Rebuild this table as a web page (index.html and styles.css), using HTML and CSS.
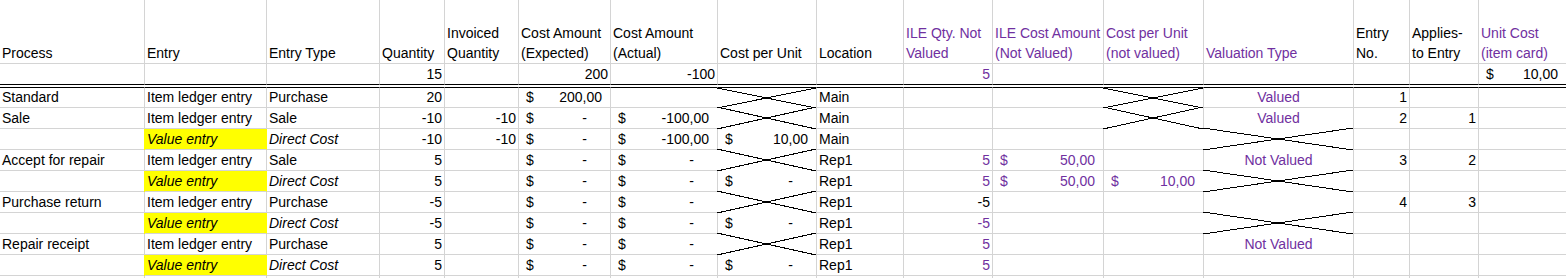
FILE: index.html
```html
<!DOCTYPE html>
<html lang="en">
<head>
<meta charset="utf-8">
<title>Item ledger entries</title>
<link rel="stylesheet" href="styles.css">
</head>
<body>
<div class="sheet">
  <!-- header -->
  <div class="c h">Process</div>
  <div class="c h">Entry</div>
  <div class="c h">Entry Type</div>
  <div class="c h">Quantity</div>
  <div class="c h">Invoiced<br>Quantity</div>
  <div class="c h">Cost Amount<br>(Expected)</div>
  <div class="c h">Cost Amount<br>(Actual)</div>
  <div class="c h">Cost per Unit</div>
  <div class="c h">Location</div>
  <div class="c h p">ILE Qty. Not<br>Valued</div>
  <div class="c h p">ILE Cost Amount<br>(Not Valued)</div>
  <div class="c h p">Cost per Unit<br>(not valued)</div>
  <div class="c h p">Valuation Type</div>
  <div class="c h">Entry<br>No.</div>
  <div class="c h">Applies-<br>to Entry</div>
  <div class="c h p">Unit Cost<br>(item card)</div>

  <!-- totals -->
  <div class="c t"></div>
  <div class="c t"></div>
  <div class="c t"></div>
  <div class="c t r">15</div>
  <div class="c t"></div>
  <div class="c t r">200</div>
  <div class="c t r">-100</div>
  <div class="c t"></div>
  <div class="c t"></div>
  <div class="c t r p">5</div>
  <div class="c t"></div>
  <div class="c t"></div>
  <div class="c t"></div>
  <div class="c t"></div>
  <div class="c t"></div>
  <div class="c t a"><span>$</span><span>10,00</span></div>

  <!-- Standard -->
  <div class="c f">Standard</div>
  <div class="c f">Item ledger entry</div>
  <div class="c f">Purchase</div>
  <div class="c f r">20</div>
  <div class="c f"></div>
  <div class="c f a"><span>$</span><span>200,00</span></div>
  <div class="c f"></div>
  <div class="c f x"><svg preserveAspectRatio="none"><line x1="0" y1="0" x2="100%" y2="100%"/><line x1="0" y1="100%" x2="100%" y2="0"/></svg></div>
  <div class="c f">Main</div>
  <div class="c f"></div>
  <div class="c f"></div>
  <div class="c f x"><svg preserveAspectRatio="none"><line x1="0" y1="0" x2="100%" y2="100%"/><line x1="0" y1="100%" x2="100%" y2="0"/></svg></div>
  <div class="c f m p">Valued</div>
  <div class="c f r">1</div>
  <div class="c f"></div>
  <div class="c f"></div>

  <!-- Sale -->
  <div class="c">Sale</div>
  <div class="c">Item ledger entry</div>
  <div class="c">Sale</div>
  <div class="c r">-10</div>
  <div class="c r">-10</div>
  <div class="c a"><span>$</span><span class="d">-</span></div>
  <div class="c a"><span>$</span><span>-100,00</span></div>
  <div class="c x"><svg preserveAspectRatio="none"><line x1="0" y1="0" x2="100%" y2="100%"/><line x1="0" y1="100%" x2="100%" y2="0"/></svg></div>
  <div class="c">Main</div>
  <div class="c"></div>
  <div class="c"></div>
  <div class="c x"><svg preserveAspectRatio="none"><line x1="0" y1="0" x2="100%" y2="100%"/><line x1="0" y1="100%" x2="100%" y2="0"/></svg></div>
  <div class="c m p">Valued</div>
  <div class="c r">2</div>
  <div class="c r">1</div>
  <div class="c"></div>

  <!-- Sale value entry -->
  <div class="c"></div>
  <div class="c y i">Value entry</div>
  <div class="c i">Direct Cost</div>
  <div class="c r">-10</div>
  <div class="c r">-10</div>
  <div class="c a"><span>$</span><span class="d">-</span></div>
  <div class="c a"><span>$</span><span>-100,00</span></div>
  <div class="c a"><span>$</span><span>10,00</span></div>
  <div class="c">Main</div>
  <div class="c"></div>
  <div class="c"></div>
  <div class="c"></div>
  <div class="c x"><svg preserveAspectRatio="none"><line x1="0" y1="0" x2="100%" y2="100%"/><line x1="0" y1="100%" x2="100%" y2="0"/></svg></div>
  <div class="c"></div>
  <div class="c"></div>
  <div class="c"></div>

  <!-- Accept for repair -->
  <div class="c">Accept for repair</div>
  <div class="c">Item ledger entry</div>
  <div class="c">Sale</div>
  <div class="c r">5</div>
  <div class="c"></div>
  <div class="c a"><span>$</span><span class="d">-</span></div>
  <div class="c a"><span>$</span><span class="d">-</span></div>
  <div class="c x"><svg preserveAspectRatio="none"><line x1="0" y1="0" x2="100%" y2="100%"/><line x1="0" y1="100%" x2="100%" y2="0"/></svg></div>
  <div class="c">Rep1</div>
  <div class="c r p">5</div>
  <div class="c a p"><span>$</span><span>50,00</span></div>
  <div class="c"></div>
  <div class="c m p">Not Valued</div>
  <div class="c r">3</div>
  <div class="c r">2</div>
  <div class="c"></div>

  <!-- Accept for repair value entry -->
  <div class="c"></div>
  <div class="c y i">Value entry</div>
  <div class="c i">Direct Cost</div>
  <div class="c r">5</div>
  <div class="c"></div>
  <div class="c a"><span>$</span><span class="d">-</span></div>
  <div class="c a"><span>$</span><span class="d">-</span></div>
  <div class="c a"><span>$</span><span class="d">-</span></div>
  <div class="c">Rep1</div>
  <div class="c r p">5</div>
  <div class="c a p"><span>$</span><span>50,00</span></div>
  <div class="c a p"><span>$</span><span>10,00</span></div>
  <div class="c x"><svg preserveAspectRatio="none"><line x1="0" y1="0" x2="100%" y2="100%"/><line x1="0" y1="100%" x2="100%" y2="0"/></svg></div>
  <div class="c"></div>
  <div class="c"></div>
  <div class="c"></div>

  <!-- Purchase return -->
  <div class="c">Purchase return</div>
  <div class="c">Item ledger entry</div>
  <div class="c">Purchase</div>
  <div class="c r">-5</div>
  <div class="c"></div>
  <div class="c a"><span>$</span><span class="d">-</span></div>
  <div class="c a"><span>$</span><span class="d">-</span></div>
  <div class="c x"><svg preserveAspectRatio="none"><line x1="0" y1="0" x2="100%" y2="100%"/><line x1="0" y1="100%" x2="100%" y2="0"/></svg></div>
  <div class="c">Rep1</div>
  <div class="c r">-5</div>
  <div class="c"></div>
  <div class="c"></div>
  <div class="c"></div>
  <div class="c r">4</div>
  <div class="c r">3</div>
  <div class="c"></div>

  <!-- Purchase return value entry -->
  <div class="c"></div>
  <div class="c y i">Value entry</div>
  <div class="c i">Direct Cost</div>
  <div class="c r">-5</div>
  <div class="c"></div>
  <div class="c a"><span>$</span><span class="d">-</span></div>
  <div class="c a"><span>$</span><span class="d">-</span></div>
  <div class="c a"><span>$</span><span class="d">-</span></div>
  <div class="c">Rep1</div>
  <div class="c r p">-5</div>
  <div class="c"></div>
  <div class="c"></div>
  <div class="c x"><svg preserveAspectRatio="none"><line x1="0" y1="0" x2="100%" y2="100%"/><line x1="0" y1="100%" x2="100%" y2="0"/></svg></div>
  <div class="c"></div>
  <div class="c"></div>
  <div class="c"></div>

  <!-- Repair receipt -->
  <div class="c">Repair receipt</div>
  <div class="c">Item ledger entry</div>
  <div class="c">Purchase</div>
  <div class="c r">5</div>
  <div class="c"></div>
  <div class="c a"><span>$</span><span class="d">-</span></div>
  <div class="c a"><span>$</span><span class="d">-</span></div>
  <div class="c x"><svg preserveAspectRatio="none"><line x1="0" y1="0" x2="100%" y2="100%"/><line x1="0" y1="100%" x2="100%" y2="0"/></svg></div>
  <div class="c">Rep1</div>
  <div class="c r p">5</div>
  <div class="c"></div>
  <div class="c"></div>
  <div class="c m p">Not Valued</div>
  <div class="c"></div>
  <div class="c"></div>
  <div class="c"></div>

  <!-- Repair receipt value entry -->
  <div class="c"></div>
  <div class="c y i">Value entry</div>
  <div class="c i">Direct Cost</div>
  <div class="c r">5</div>
  <div class="c"></div>
  <div class="c a"><span>$</span><span class="d">-</span></div>
  <div class="c a"><span>$</span><span class="d">-</span></div>
  <div class="c a"><span>$</span><span class="d">-</span></div>
  <div class="c">Rep1</div>
  <div class="c r p">5</div>
  <div class="c"></div>
  <div class="c"></div>
  <div class="c"></div>
  <div class="c"></div>
  <div class="c"></div>
  <div class="c"></div>

  <!-- empty row -->
  <div class="c"></div><div class="c"></div><div class="c"></div><div class="c"></div>
  <div class="c"></div><div class="c"></div><div class="c"></div><div class="c"></div>
  <div class="c"></div><div class="c"></div><div class="c"></div><div class="c"></div>
  <div class="c"></div><div class="c"></div><div class="c"></div><div class="c"></div>
</div>
</body>
</html>
```
FILE: styles.css
```css
html, body {
  margin: 0;
  padding: 0;
  background: #fff;
}

body {
  overflow: hidden;
  font-family: "Liberation Sans", Arial, sans-serif;
  font-size: 14px;
  color: #000;
}

.sheet {
  display: grid;
  grid-template-columns: 145px 122px 113px 65px 74px 92px 107px 99px 87px 89px 111px 100px 150px 56px 69px 88px;
  width: 1567px;
}

.c {
  box-sizing: border-box;
  height: 21px;
  border-right: 1px solid #d4d4d4;
  border-bottom: 1px solid #d4d4d4;
  padding: 0 2px;
  display: flex;
  align-items: flex-end;
  line-height: 20px;
  white-space: nowrap;
}

.h {
  height: 64px;
}

.t {
  border-bottom-color: #000;
}

.f {
  border-top: 1px solid #000;
  margin-top: 2px;
}

.r {
  justify-content: flex-end;
}

.m {
  justify-content: center;
}

.a {
  justify-content: space-between;
  padding: 0 8px 0 7px;
}

.d {
  margin-right: 15px;
}

.p {
  color: #7030a0;
}

.i {
  font-style: italic;
}

.y {
  background: #ffff00;
  border-right-color: #ffff00;
  box-shadow: -1px 0 0 #ffff00;
}

.x {
  position: relative;
}

.x svg {
  position: absolute;
  top: -1px;
  left: -1px;
  width: calc(100% + 1px);
  height: calc(100% + 2px);
  background: #fff;
  shape-rendering: crispEdges;
}

.x svg line {
  stroke: #000;
  stroke-width: 1;
}

.f.x svg {
  top: 0;
  height: calc(100% + 1px);
}
```
